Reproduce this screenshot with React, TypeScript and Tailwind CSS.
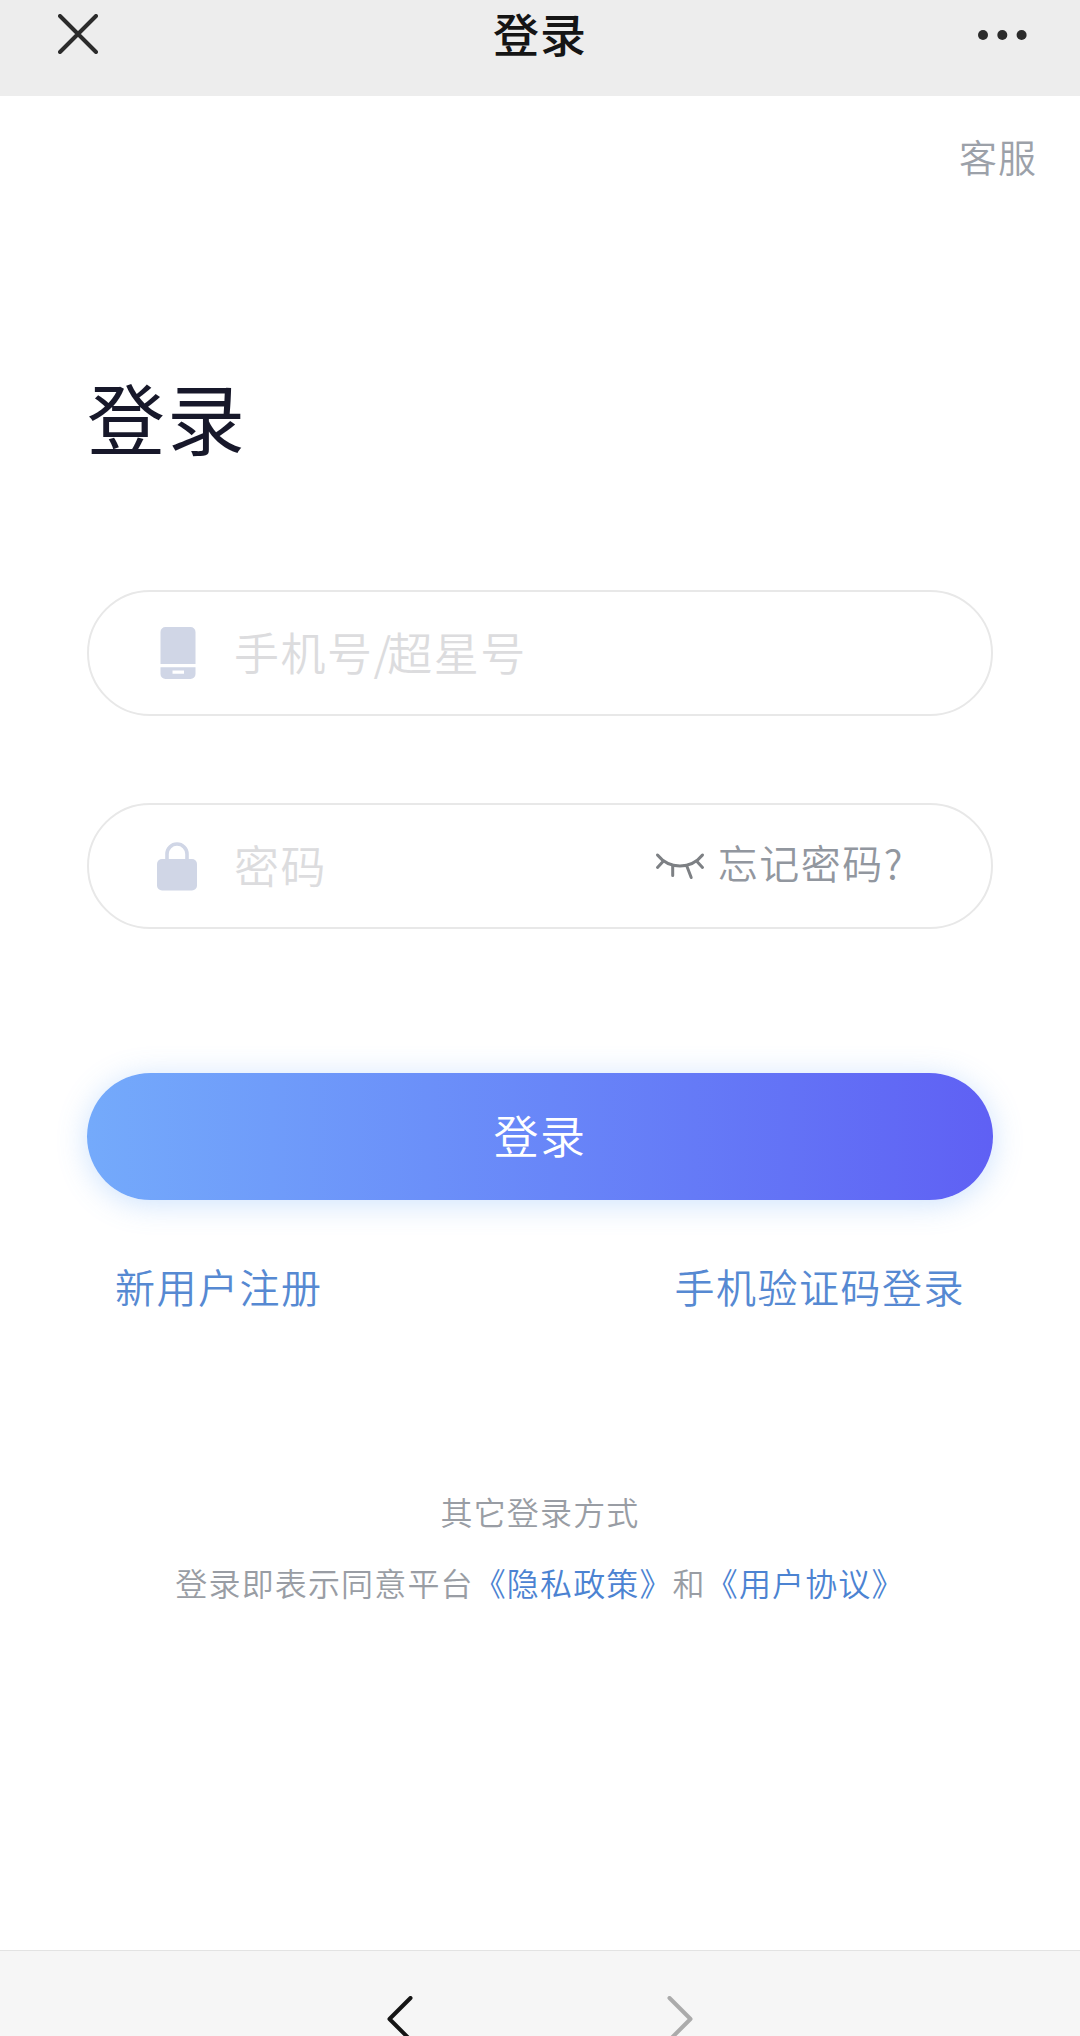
const CloseIcon = () => (
  <svg viewBox="0 0 40 40" className="h-10 w-10" fill="none" stroke="#2b2b2b" strokeWidth="4" strokeLinecap="round">
    <path d="M2 2 38 38M38 2 2 38" />
  </svg>
);

const MoreIcon = () => (
  <svg viewBox="0 0 50 12" className="h-3 w-[50px]" fill="#2b2b2b">
    <circle cx="6" cy="6" r="5" />
    <circle cx="25.3" cy="6" r="5" />
    <circle cx="44.6" cy="6" r="5" />
  </svg>
);

const PhoneIcon = () => (
  <svg viewBox="0 0 36 54" className="h-[54px] w-9" fill="#d0d6e6">
    <path d="M5.500 1h25a5 5 0 0 1 5 5v32H.5V6a5 5 0 0 1 5-5Z" />
    <path fillRule="evenodd" d="M.5 41.200h35V48a5 5 0 0 1-5 5h-25a5 5 0 0 1-5-5Zm12 3.300v3.200h11.500v-3.200Z" />
  </svg>
);

const LockIcon = () => (
  <svg viewBox="0 0 42 50" className="h-[50px] w-[42px]">
    <path d="M11 20v-7a10 10 0 0 1 20 0v7" fill="none" stroke="#d0d6e6" strokeWidth="3.600" />
    <rect x="1" y="18" width="40" height="31.500" rx="5" fill="#d0d6e6" />
  </svg>
);

const EyeClosedIcon = () => (
  <svg
    viewBox="0 0 50 28"
    className="h-7 w-[50px]"
    fill="none"
    stroke="#7d8084"
    strokeWidth="3"
    strokeLinecap="round"
  >
    <path d="M2.500 3C14 17.500 36 17.500 47.500 3" />
    <path d="m8.500 9-6 6.500M41.500 9l6 6.500M17.700 14v9.500M32 14.500l4.200 11" />
  </svg>
);

const Chevron = ({ direction, color }: { direction: "left" | "right"; color: string }) => (
  <svg
    viewBox="0 0 26 46"
    className="h-[46px] w-[26px]"
    fill="none"
    stroke={color}
    strokeWidth="4"
    strokeLinecap="round"
    strokeLinejoin="round"
  >
    <path d={direction === "left" ? "M23.500 2 2.500 23l21 21" : "M2.500 2l21 21-21 21"} />
  </svg>
);

export default function App() {
  return (
    <div className="flex h-[2036px] w-[1080px] flex-col overflow-hidden bg-white font-['Noto_Sans_CJK_SC',sans-serif] leading-none font-[350]">
      <header className="grid h-24 shrink-0 grid-cols-3 items-start bg-[#ededed] px-[51px]">
        <button type="button" className="mt-3.5 ml-[7px] justify-self-start">
          <CloseIcon />
        </button>
        <h1 className="mt-[9px] justify-self-center text-[46px] leading-none font-medium tracking-[1px] text-[#151515]">
          登录
        </h1>
        <button type="button" className="mt-[29px] mr-0.5 justify-self-end">
          <MoreIcon />
        </button>
      </header>

      <main className="flex flex-1 flex-col px-[87px]">
        <a className="mt-[41px] -mr-[44px] self-end text-[38px] tracking-[1px] text-[#9ca1a9]">客服</a>

        <h2 className="mt-[202px] text-[78px] leading-none font-normal tracking-[2px] text-[#17182a]">登录</h2>

        <div className="mt-[135px] flex h-[126px] items-center rounded-full border-2 border-[#e8e8e8] pl-[71px]">
          <PhoneIcon />
          <span className="ml-[38px] pb-1 text-[45px] tracking-[1.5px] text-[#dcdcde]">
            手机号<span className="tracking-[-4px]">/</span>超星号
          </span>
        </div>

        <div className="mt-[87px] flex h-[126px] items-center rounded-full border-2 border-[#e8e8e8] pr-[87px] pl-[67px]">
          <LockIcon />
          <span className="ml-9 pb-1 text-[45px] tracking-[1.5px] text-[#dcdcde]">密码</span>
          <div className="ml-auto flex items-center">
            <EyeClosedIcon />
            <a className="ml-[13px] pb-2 text-[40px] tracking-[1.5px] text-[#92979f]">忘记密码?</a>
          </div>
        </div>

        <button
          type="button"
          className="mt-36 h-[127px] rounded-full bg-linear-to-r from-[#74aafb] to-[#5f60f4] pb-[5px] text-[45px] leading-none tracking-[1.5px] text-white shadow-[0_4px_30px_rgba(90,160,250,0.3)]"
        >
          登录
        </button>

        <div className="mt-[66px] flex justify-between pr-[28px] pl-7 text-[40px] tracking-[1.5px] text-[#5689d2]">
          <a>新用户注册</a>
          <a>手机验证码登录</a>
        </div>

        <div className="mt-[189px] flex flex-col items-center text-[32px] tracking-[1.15px] text-[#999da4]">
          <p>其它登录方式</p>
          <p className="mt-[39px] whitespace-nowrap">
            登录即表示同意平台<a className="text-[#4c83d2]">《隐私政策》</a>和<a className="text-[#4c83d2]">《用户协议》</a>
          </p>
        </div>
      </main>

      <footer className="flex h-[86px] shrink-0 items-start justify-center gap-[254px] border-t border-[#e3e3e3] bg-[#f6f6f6] pt-[45px]">
        <Chevron direction="left" color="#151515" />
        <Chevron direction="right" color="#ababab" />
      </footer>
    </div>
  );
}
